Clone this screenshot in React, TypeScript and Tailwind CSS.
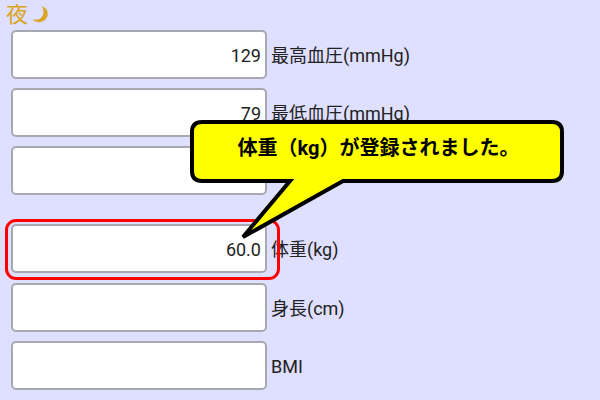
const font = { fontFamily: "Roboto, 'Noto Sans CJK JP', sans-serif" };

function Row({ value, label, className = "" }: { value?: string; label: string; className?: string }) {
  return (
    <div className={`flex items-center ${className}`}>
      <div className="w-[256px] h-[49px] shrink-0 bg-white border-2 border-[#a8a8b0] rounded-[5px] flex items-center justify-end pr-[4px] pt-[1px] text-[18px] text-[#222222]">
        {value}
      </div>
      <span className="ml-[4px] pt-[2px] text-[18px] text-[#222222]">{label}</span>
    </div>
  );
}

export default function App() {
  return (
    <div
      className="relative w-[600px] h-[400px] overflow-hidden bg-[#dfdfff]"
      style={font}
    >
      <div className="pl-[11px]">
        <div className="-ml-[5px] h-[30px] flex items-center gap-[5px] text-[22px] leading-none text-[#daa520]">
          <span>夜</span>
          <svg width="16" height="18" viewBox="0 0 16 18">
            <path d="M9 0 C14 2 16 7 14 11 C12 16 5 18 0 14 C1 13 3 14 5 13.5 C9 12.5 10.5 9 10.5 6.5 C10.5 4 10 2 9 0 Z" fill="#daa520" />
          </svg>
        </div>
        <Row value="129" label="最高血圧(mmHg)" />
        <Row value="79" label="最低血圧(mmHg)" className="mt-[9px]" />
        <Row label="" className="mt-[9px]" />
        <Row value="60.0" label="体重(kg)" className="mt-[29px]" />
        <Row label="身長(cm)" className="mt-[10px]" />
        <Row label="BMI" className="mt-[9px]" />
      </div>

      <div className="absolute left-[5px] top-[219px] w-[275px] h-[61px] border-[3px] border-[#ff0000] rounded-[11px]" />

      <svg className="absolute left-0 top-0" width="600" height="400" viewBox="0 0 600 400">
        <path
          d="M202 122 H552 Q562 122 562 132 V171 Q562 181 552 181 H343 L243 237 L290 181 H202 Q192 181 192 171 V132 Q192 122 202 122 Z"
          fill="#ffff00"
          stroke="#000000"
          strokeWidth="4"
          strokeLinejoin="miter"
        />
      </svg>
      <div className="absolute left-[190px] top-[120px] w-[374px] h-[56px] flex items-center justify-center text-[20px] font-bold text-black whitespace-nowrap pl-[3px]">
        体重（kg）が登録されました。
      </div>
    </div>
  );
}
